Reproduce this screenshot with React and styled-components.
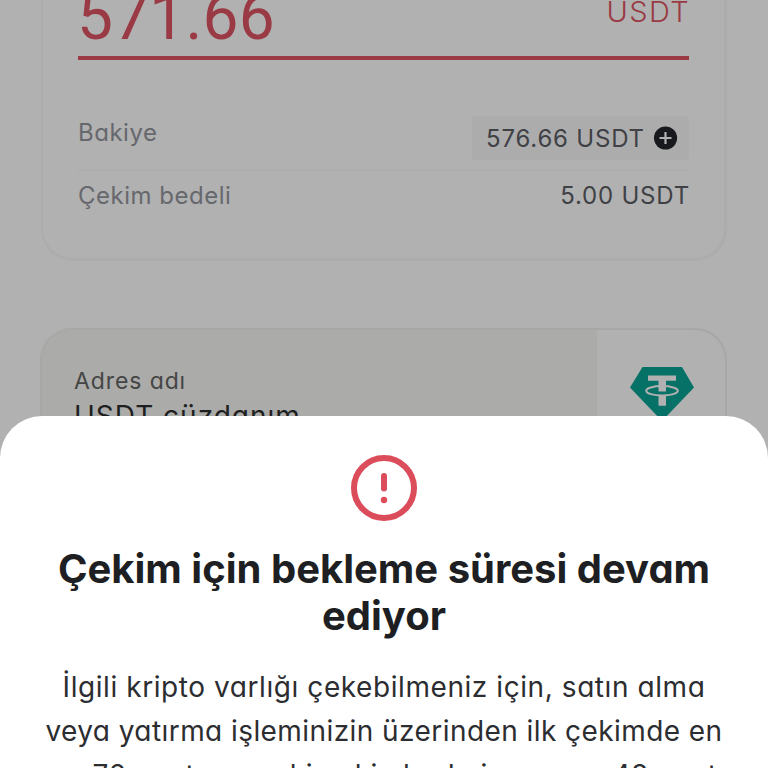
import React from 'react';
import styled, { createGlobalStyle } from 'styled-components';

const colors = {
    page: '#b1b1b1',
    cardBorder: '#acacac',
    danger: '#993a44',
    alert: '#dc4d5c',
    label: '#66686d',
    value: '#404145',
    title: '#1e1f23',
    body: '#2c2d31',
    tether: '#067166',
};

const GlobalStyle = createGlobalStyle`
    * {
        box-sizing: border-box;
    }

    body {
        margin: 0;
        background-color: ${colors.page};
        font-family: Inter, 'Liberation Sans', sans-serif;
        font-feature-settings: 'cv11';
    }
`;

const Screen = styled.div`
    width: 768px;
    height: 768px;
    overflow: hidden;
    display: flex;
    flex-direction: column;
    background-color: ${colors.page};
`;

const Backdrop = styled.div`
    height: 416px;
    flex: none;
    padding: 0 41px;
`;

const AmountCard = styled.section`
    height: 261px;
    padding: 0 35px;
    border: solid ${colors.cardBorder};
    border-width: 0 3px 3px 2px;
    border-radius: 0 0 32px 32px;
`;

const AmountRow = styled.div`
    display: flex;
    justify-content: space-between;
    height: 60px;
    border-bottom: 4px solid ${colors.danger};
    color: ${colors.danger};
`;

const Amount = styled.span`
    margin: -12px 0 0 -1px;
    font-family: Roboto, sans-serif;
    font-size: 64px;
    line-height: 60px;
    letter-spacing: 0.2px;
`;

const Currency = styled.span`
    margin: -5px -1px 0 0;
    font-size: 29px;
    line-height: 34px;
    font-weight: 300;
    letter-spacing: 1.4px;
`;

const Details = styled.div`
    padding-top: 56px;
`;

const DetailRow = styled.div`
    display: flex;
    justify-content: space-between;
    height: 53px;

    & + & {
        border-top: 2px solid #adadaf;
    }
`;

const DetailLabel = styled.span`
    padding-top: ${({ $top }) => $top}px;
    color: ${colors.label};
    font-size: 24px;
    line-height: 30px;
    letter-spacing: 0.5px;
`;

const DetailValue = styled.span`
    margin-right: -1px;
    padding-top: 10px;
    color: ${colors.value};
    font-size: 24px;
    line-height: 30px;
    letter-spacing: 0.8px;
`;

const BalanceChip = styled.div`
    display: flex;
    align-items: center;
    justify-content: space-between;
    width: 217px;
    height: 44px;
    padding: 0 11px 0 14px;
    border-radius: 4px;
    background-color: #acacad;
    color: ${colors.value};
    font-size: 24px;
    letter-spacing: 0.8px;
    white-space: nowrap;
`;

const AddressCard = styled.section`
    display: flex;
    height: 120px;
    margin: 67px 0 0 -1px;
    border: 2px solid #a7a7a5;
    border-bottom: 0;
    border-radius: 32px 32px 0 0;
    overflow: hidden;
`;

const AddressInfo = styled.div`
    flex: 1;
    padding: 36px 0 0 32px;
    background-color: #ababa9;
`;

const AddressLabel = styled.div`
    color: #454545;
    font-size: 23px;
    line-height: 30px;
    letter-spacing: 0.9px;
`;

const AddressName = styled.div`
    margin-top: 4px;
    color: #1e1f21;
    font-size: 28px;
    line-height: 32px;
    letter-spacing: 1px;
`;

const CoinBox = styled.div`
    display: flex;
    justify-content: center;
    width: 128px;
    padding: 36px 0 0 2px;
`;

const Sheet = styled.section`
    flex: none;
    height: 352px;
    display: flex;
    flex-direction: column;
    align-items: center;
    padding-top: 39px;
    background-color: #fff;
    border-radius: 42px 42px 0 0;
    text-align: center;

    svg {
        flex: none;
    }
`;

const Title = styled.h1`
    margin: 24px 0 0;
    color: ${colors.title};
    font-size: 40px;
    line-height: 47px;
    font-weight: 700;
    white-space: nowrap;
`;

const Message = styled.p`
    margin: 26px 0 0;
    color: ${colors.body};
    font-size: 28px;
    line-height: 44px;
    white-space: nowrap;
`;

const Line = styled.span`
    display: block;
    letter-spacing: ${({ $spacing = 0 }) => $spacing}px;
`;

function PlusIcon() {
    return (
        <svg width="24" height="24" viewBox="0 0 24 24">
            <circle cx="11.5" cy="12" r="11.6" fill="#17191d" />
            <path d="M11.5 6v12M5.5 12h12" stroke="#b1b1b1" strokeWidth="2.2" />
        </svg>
    );
}

function TetherIcon() {
    return (
        <svg width="64" height="56" viewBox="0 0 64 56">
            <path d="M12.5 1H52L64 21.5 32 55 0 21.5Z" fill={colors.tether} />
            <path d="M18 9.5h28v5.2H36v10.8h-7.5V14.7H18ZM28.5 29H36v10.8h-7.5Z" fill={colors.page} />
            <ellipse cx="32" cy="24.8" rx="15.8" ry="4.7" fill="none" stroke={colors.page} strokeWidth="2" />
        </svg>
    );
}

function AlertIcon() {
    return (
        <svg width="66" height="66" viewBox="0 0 66 66">
            <circle cx="33" cy="33" r="30" fill="none" stroke={colors.alert} strokeWidth="6" />
            <path d="M33 21v12.5" stroke={colors.alert} strokeWidth="6" strokeLinecap="round" />
            <circle cx="33" cy="45" r="3.2" fill={colors.alert} />
        </svg>
    );
}

function App() {
    return (
        <Screen>
            <GlobalStyle />
            <Backdrop>
                <AmountCard>
                    <AmountRow>
                        <Amount>571.66</Amount>
                        <Currency>USDT</Currency>
                    </AmountRow>
                    <Details>
                        <DetailRow>
                            <DetailLabel $top={2}>Bakiye</DetailLabel>
                            <BalanceChip>
                                <span>576.66 USDT</span>
                                <PlusIcon />
                            </BalanceChip>
                        </DetailRow>
                        <DetailRow>
                            <DetailLabel $top={10}>Çekim bedeli</DetailLabel>
                            <DetailValue>5.00 USDT</DetailValue>
                        </DetailRow>
                    </Details>
                </AmountCard>
                <AddressCard>
                    <AddressInfo>
                        <AddressLabel>Adres adı</AddressLabel>
                        <AddressName>USDT cüzdanım</AddressName>
                    </AddressInfo>
                    <CoinBox>
                        <TetherIcon />
                    </CoinBox>
                </AddressCard>
            </Backdrop>
            <Sheet>
                <AlertIcon />
                <Title>
                    <Line>Çekim için bekleme süresi devam</Line>
                    <Line>ediyor</Line>
                </Title>
                <Message>
                    <Line $spacing={0.57}>İlgili kripto varlığı çekebilmeniz için, satın alma</Line>
                    <Line $spacing={0.43}>veya yatırma işleminizin üzerinden ilk çekimde en</Line>
                    <Line $spacing={0.5}>az 72 saat, sonraki çekimlerde ise en az 48 saat</Line>
                </Message>
            </Sheet>
        </Screen>
    );
}

export default App;
